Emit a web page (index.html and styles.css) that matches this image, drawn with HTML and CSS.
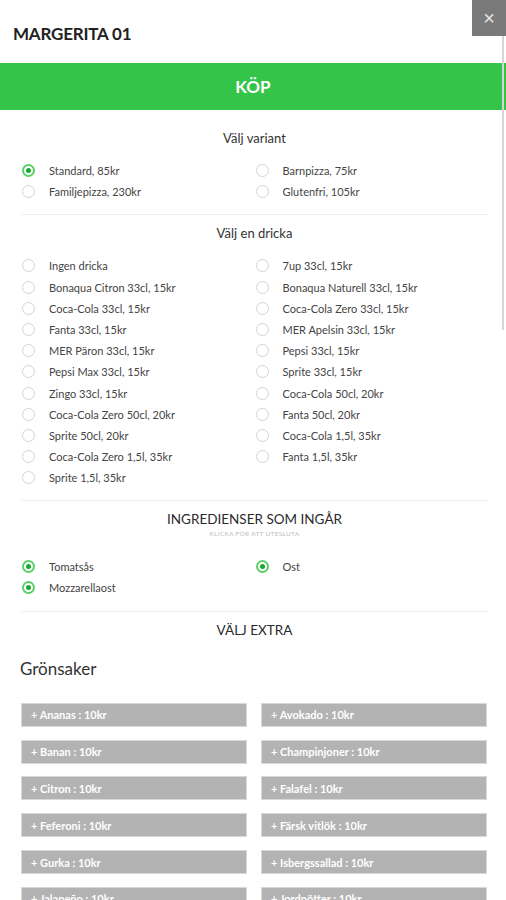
FILE: index.html
```html
<!DOCTYPE html>
<html lang="sv">
<head>
  <meta charset="UTF-8" />
  <title>Margerita 01</title>
  <link rel="stylesheet" href="styles.css">
</head>
<body>
  <div class="modal">
    <div class="modal-header">
      <h1>MARGERITA 01</h1>
      <button class="close-btn">&times;</button>
    </div>

    <button class="buy-btn">KÖP</button>

    <div class="section first">
      <h3>Välj variant</h3>
      <div class="options">
        <label class="option checked"><span class="radio"></span>Standard, 85kr</label>
        <label class="option"><span class="radio"></span>Barnpizza, 75kr</label>
        <label class="option"><span class="radio"></span>Familjepizza, 230kr</label>
        <label class="option"><span class="radio"></span>Glutenfri, 105kr</label>
      </div>
    </div>

    <div class="section">
      <h3>Välj en dricka</h3>
      <div class="options drinks">
        <label class="option"><span class="radio"></span>Ingen dricka</label>
        <label class="option"><span class="radio"></span>7up 33cl, 15kr</label>
        <label class="option"><span class="radio"></span>Bonaqua Citron 33cl, 15kr</label>
        <label class="option"><span class="radio"></span>Bonaqua Naturell 33cl, 15kr</label>
        <label class="option"><span class="radio"></span>Coca-Cola 33cl, 15kr</label>
        <label class="option"><span class="radio"></span>Coca-Cola Zero 33cl, 15kr</label>
        <label class="option"><span class="radio"></span>Fanta 33cl, 15kr</label>
        <label class="option"><span class="radio"></span>MER Apelsin 33cl, 15kr</label>
        <label class="option"><span class="radio"></span>MER Päron 33cl, 15kr</label>
        <label class="option"><span class="radio"></span>Pepsi 33cl, 15kr</label>
        <label class="option"><span class="radio"></span>Pepsi Max 33cl, 15kr</label>
        <label class="option"><span class="radio"></span>Sprite 33cl, 15kr</label>
        <label class="option"><span class="radio"></span>Zingo 33cl, 15kr</label>
        <label class="option"><span class="radio"></span>Coca-Cola 50cl, 20kr</label>
        <label class="option"><span class="radio"></span>Coca-Cola Zero 50cl, 20kr</label>
        <label class="option"><span class="radio"></span>Fanta 50cl, 20kr</label>
        <label class="option"><span class="radio"></span>Sprite 50cl, 20kr</label>
        <label class="option"><span class="radio"></span>Coca-Cola 1,5l, 35kr</label>
        <label class="option"><span class="radio"></span>Coca-Cola Zero 1,5l, 35kr</label>
        <label class="option"><span class="radio"></span>Fanta 1,5l, 35kr</label>
        <label class="option"><span class="radio"></span>Sprite 1,5l, 35kr</label>
      </div>
    </div>

    <div class="section">
      <h3 class="caps">INGREDIENSER SOM INGÅR</h3>
      <p class="hint">KLICKA FÖR ATT UTESLUTA</p>
      <div class="options ingredients">
        <label class="option checked"><span class="radio"></span>Tomatsås</label>
        <label class="option checked"><span class="radio"></span>Ost</label>
        <label class="option checked"><span class="radio"></span>Mozzarellaost</label>
      </div>
    </div>

    <div class="section">
      <h3 class="caps">VÄLJ EXTRA</h3>
      <h2 class="group-title">Grönsaker</h2>
      <div class="extras">
        <button class="extra">+ Ananas : 10kr</button>
        <button class="extra">+ Avokado : 10kr</button>
        <button class="extra">+ Banan : 10kr</button>
        <button class="extra">+ Champinjoner : 10kr</button>
        <button class="extra">+ Citron : 10kr</button>
        <button class="extra">+ Falafel : 10kr</button>
        <button class="extra">+ Feferoni : 10kr</button>
        <button class="extra">+ Färsk vitlök : 10kr</button>
        <button class="extra">+ Gurka : 10kr</button>
        <button class="extra">+ Isbergssallad : 10kr</button>
        <button class="extra">+ Jalapeño : 10kr</button>
        <button class="extra">+ Jordnötter : 10kr</button>
      </div>
    </div>
  </div>

  <div class="scrollbar"></div>
</body>
</html>
```

FILE: styles.css
```css
body {
  margin: 0;
  background: #fff;
  color: #333;
  font-family: Lato, "Open Sans", Arial, sans-serif;
  height: 900px;
  overflow: hidden;
  position: relative;
}

.modal {
  width: 506px;
}

.modal-header {
  height: 63px;
  display: flex;
  align-items: center;
  padding: 0 13px;
  box-sizing: border-box;
}

.modal-header h1 {
  margin: 4px 0 0 0;
  font-size: 17px;
  font-weight: bold;
  color: #222;
  letter-spacing: -0.2px;
}

.close-btn {
  position: absolute;
  top: 0;
  right: 0;
  width: 34px;
  height: 36px;
  border: none;
  background: #7a7a7a;
  color: #e6e6e6;
  font-size: 20px;
  line-height: 36px;
  padding: 0;
  font-family: Arial, sans-serif;
  z-index: 2;
}

.buy-btn {
  display: block;
  width: 100%;
  height: 47px;
  border: none;
  background: #34c44a;
  color: #fff;
  font-family: Lato, Arial, sans-serif;
  font-size: 17px;
  font-weight: bold;
  padding: 0;
}

.section {
  margin: 0 18px 0 21px;
  border-top: 1px solid #ededed;
  padding: 10px 0 12px 0;
}

.section.first {
  border-top: none;
  padding-top: 20px;
}

.section h3 {
  margin: 0 0 14px 0;
  font-size: 13px;
  line-height: 16px;
  font-weight: normal;
  color: #333;
  text-align: center;
}

.section h3.caps {
  font-size: 13.5px;
  color: #2a2a2a;
}

.hint {
  margin: -12px 0 16px 0;
  font-size: 6.5px;
  line-height: 10px;
  letter-spacing: 0.3px;
  color: #bdbdbd;
  text-align: center;
}

.options {
  display: grid;
  grid-template-columns: 1fr 1fr;
  grid-auto-rows: 21.2px;
}

.options.ingredients {
  margin-bottom: 1px;
}

.option {
  display: flex;
  align-items: center;
  font-size: 11px;
  color: #444;
  padding-left: 1px;
}

.radio {
  width: 13px;
  height: 13px;
  border: 1px solid #d4d4d4;
  border-radius: 50%;
  box-sizing: border-box;
  margin-right: 14px;
  flex-shrink: 0;
  position: relative;
}

.option.checked .radio {
  border: 2px solid #5ad06a;
}

.option.checked .radio::after {
  content: "";
  position: absolute;
  top: 2px;
  left: 2px;
  width: 5px;
  height: 5px;
  border-radius: 50%;
  background: #18a82e;
}

.group-title {
  margin: 21px 0 24px -1px;
  font-size: 17px;
  line-height: 20px;
  font-weight: normal;
  color: #333;
}

.extras {
  display: grid;
  grid-template-columns: 226px 226px;
  column-gap: 14px;
  row-gap: 12.8px;
}

.extra {
  height: 24px;
  border: 1px solid #d8d8d8;
  background: #b3b3b3;
  color: #fff;
  font-family: Lato, Arial, sans-serif;
  font-size: 11px;
  font-weight: bold;
  text-align: left;
  padding: 0 9px;
}

.scrollbar {
  position: absolute;
  top: 4px;
  right: 2px;
  width: 2px;
  height: 326px;
  background: #d6d6d6;
  z-index: 1;
}
```
